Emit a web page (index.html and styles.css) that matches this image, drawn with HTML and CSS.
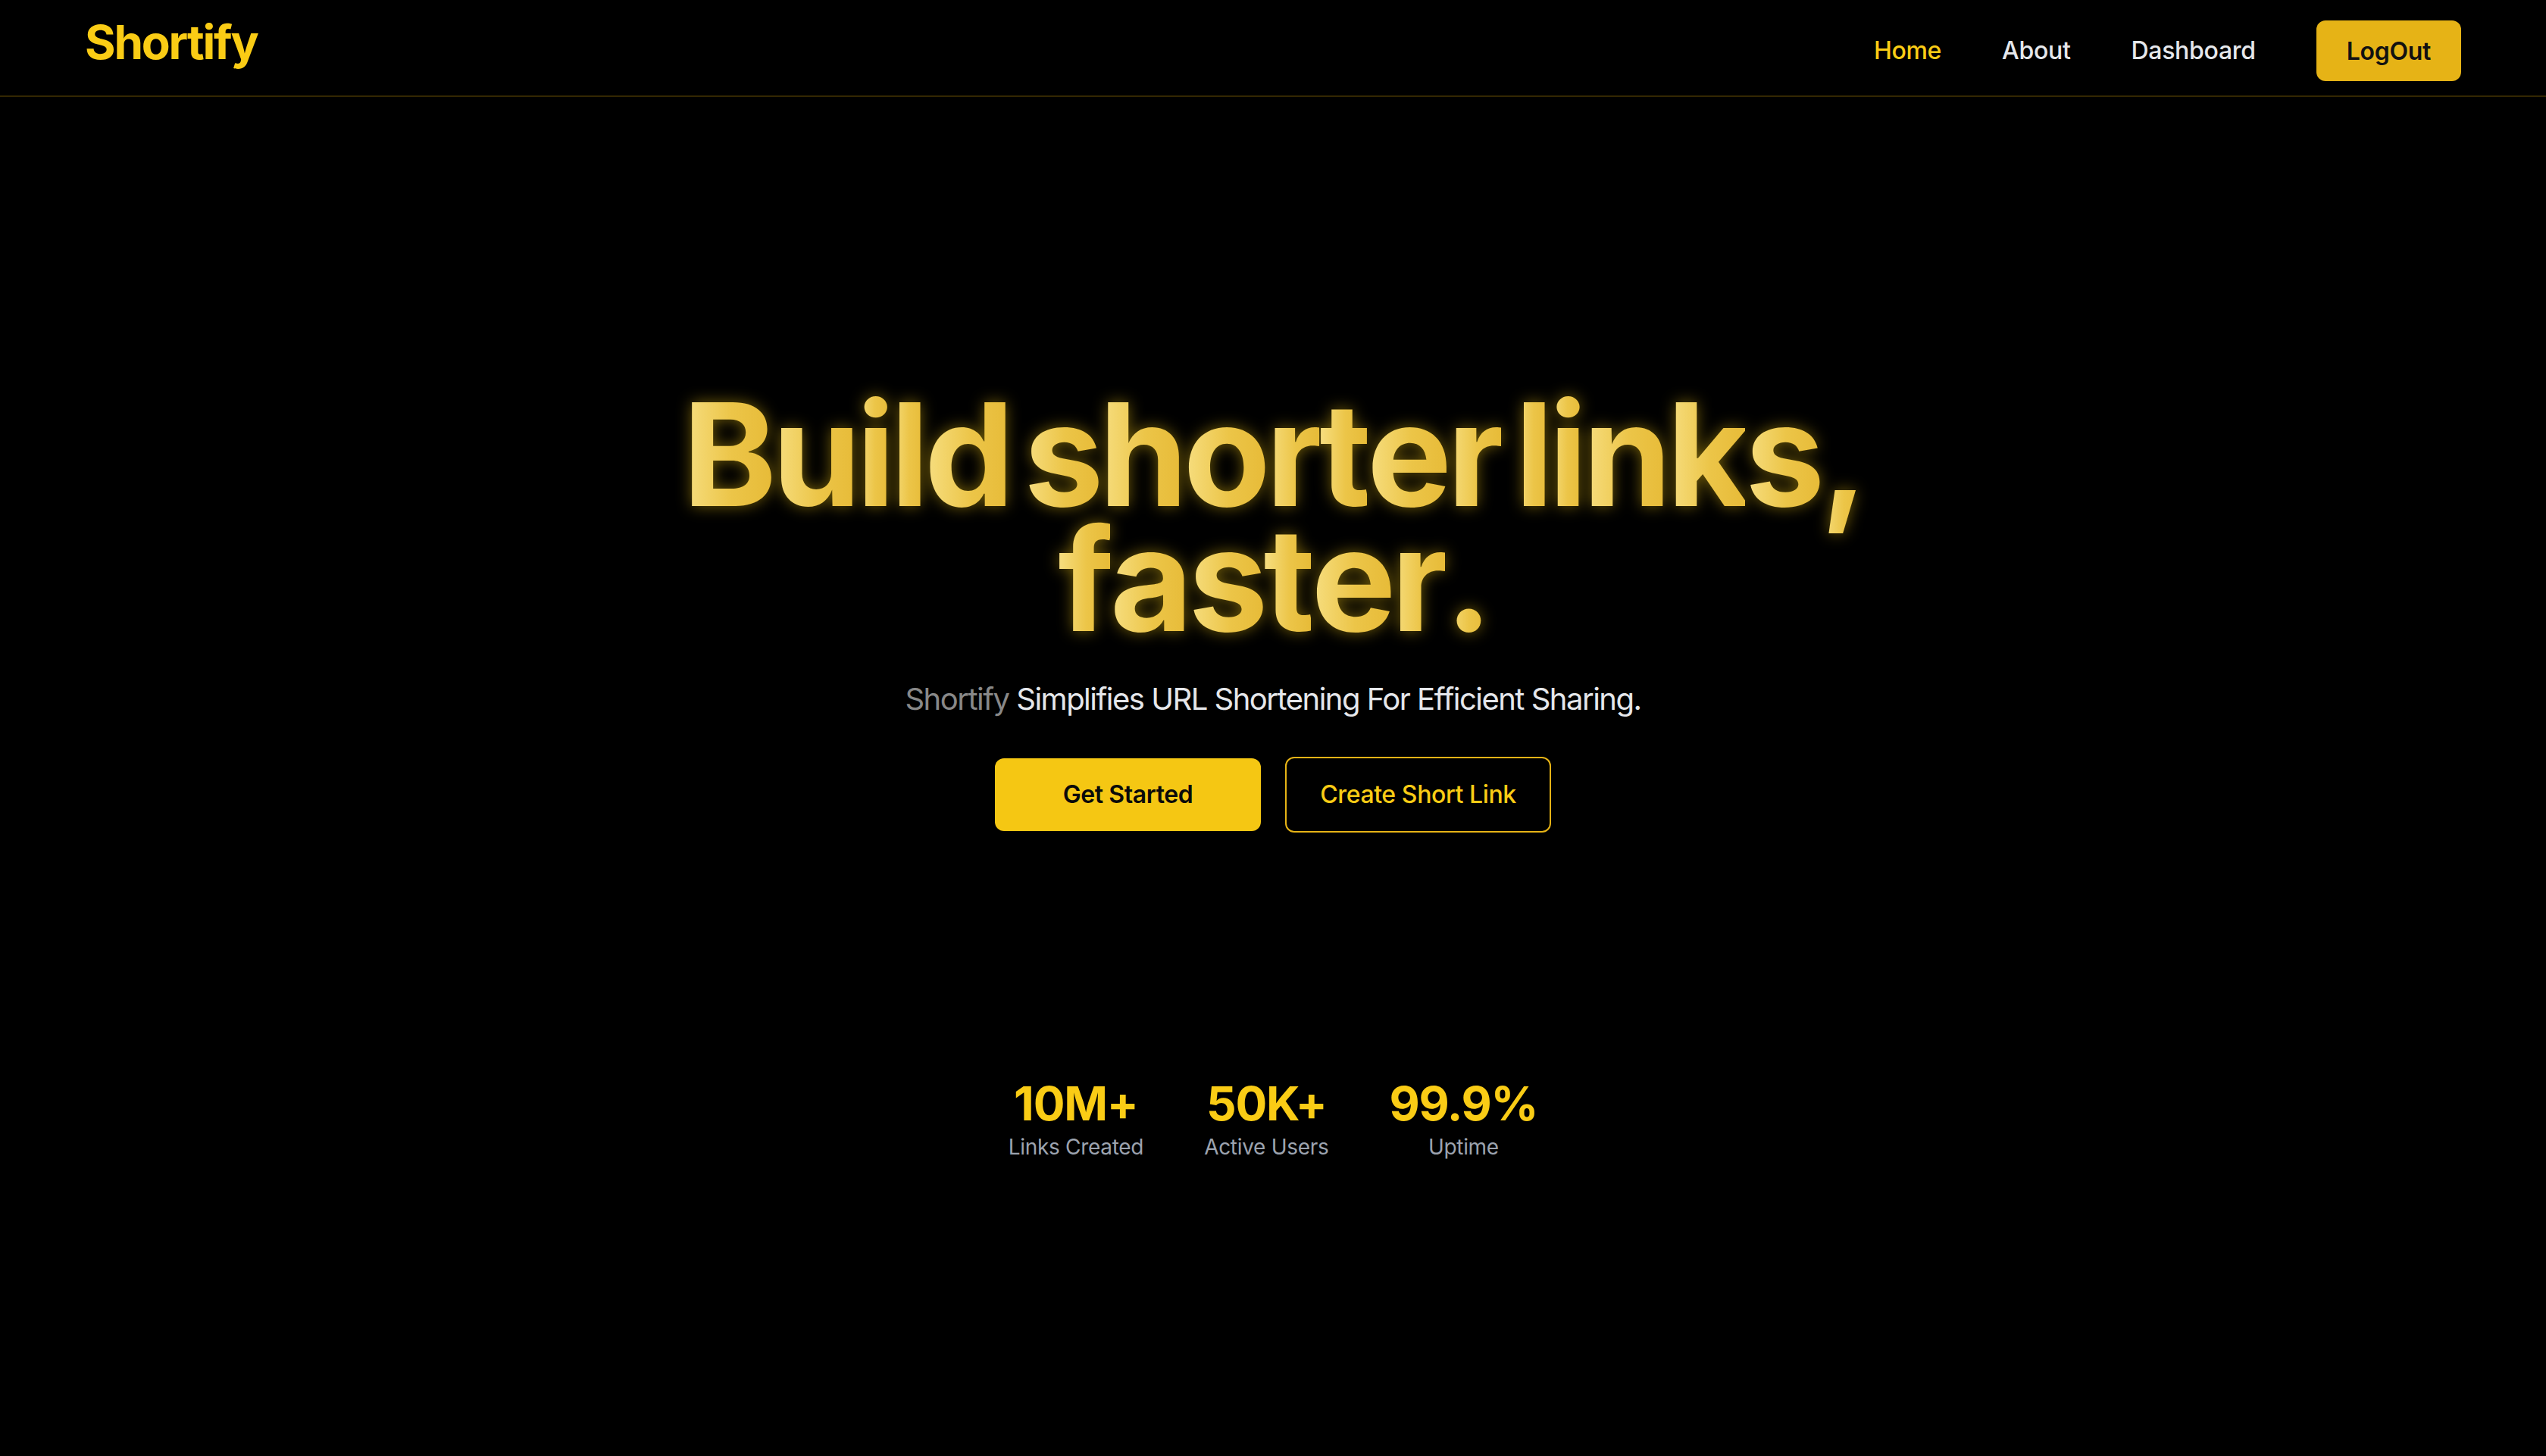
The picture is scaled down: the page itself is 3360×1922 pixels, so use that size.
FILE: index.html
```html
<!DOCTYPE html>
<html lang="en">
<head>
<meta charset="utf-8">
<title>Shortify</title>
<link rel="stylesheet" href="styles.css">
</head>
<body>
<header class="topbar">
  <a class="logo" href="#">Shortify</a>
  <nav class="nav">
    <a class="nav-link active" href="#">Home</a>
    <a class="nav-link" href="#">About</a>
    <a class="nav-link" href="#">Dashboard</a>
    <button class="logout">LogOut</button>
  </nav>
</header>
<main class="hero">
  <h1 class="title">
    <span class="line"><span class="word"><span class="ch">B</span><span class="ch">u</span><span class="ch">i</span><span class="ch">l</span><span class="ch">d</span></span> <span class="word"><span class="ch">s</span><span class="ch">h</span><span class="ch">o</span><span class="ch">r</span><span class="ch">t</span><span class="ch">e</span><span class="ch">r</span></span> <span class="word"><span class="ch">l</span><span class="ch">i</span><span class="ch">n</span><span class="ch">k</span><span class="ch">s</span><span class="ch ch-tail">,</span></span></span>
    <span class="line"><span class="word"><span class="ch">f</span><span class="ch">a</span><span class="ch">s</span><span class="ch">t</span><span class="ch">e</span><span class="ch">r</span><span class="ch">.</span></span></span>
  </h1>
  <p class="subtitle"><span class="brand">Shortify</span> Simplifies URL Shortening For Efficient Sharing.</p>
  <div class="actions">
    <a class="btn btn-primary" href="#">Get Started</a>
    <a class="btn btn-outline" href="#">Create Short Link</a>
  </div>
  <div class="stats">
    <div class="stat"><div class="stat-num">10M+</div><div class="stat-label">Links Created</div></div>
    <div class="stat"><div class="stat-num">50K+</div><div class="stat-label">Active Users</div></div>
    <div class="stat"><div class="stat-num">99.9%</div><div class="stat-label">Uptime</div></div>
  </div>
</main>
</body>
</html>
```
FILE: styles.css
```css
* { box-sizing: border-box; }
html, body { margin: 0; padding: 0; background: #000; }
body {
  font-family: Inter, "Noto Sans", "Liberation Sans", sans-serif;
  color: #e5e7eb;
  min-height: 1922px;
}
a { text-decoration: none; }

.topbar {
  height: 128px;
  padding: 25px 112px 0 112px;
  display: flex;
  justify-content: space-between;
  align-items: flex-start;
  border-bottom: 2px solid rgba(234, 179, 8, 0.22);
}
.logo {
  font-size: 62px;
  line-height: 62px;
  font-weight: 700;
  color: #facc15;
  letter-spacing: -2.2px;
}
.nav {
  margin-top: 2px;
  display: flex;
  align-items: center;
  gap: 80px;
}
.nav-link {
  font-size: 32px;
  line-height: 48px;
  font-weight: 500;
  color: #e5e7eb;
  letter-spacing: -0.3px;
}
.nav-link.active { color: #facc15; }
.logout {
  height: 80px;
  padding: 0 40px;
  border: none;
  border-radius: 12px;
  background: #e6b316;
  color: #111;
  font-family: inherit;
  font-size: 32px;
  font-weight: 600;
  letter-spacing: -0.3px;
}

.hero {
  display: flex;
  flex-direction: column;
  align-items: center;
  padding-top: 389px;
}
.title {
  margin: 0;
  font-size: 188px;
  line-height: 165px;
  font-weight: 700;
  letter-spacing: -0.032em;
  word-spacing: -20px;
  text-align: center;
  filter: drop-shadow(0 0 10px rgba(250, 204, 21, 0.45));
}
.line { display: block; height: 165px; }
.ch {
  display: inline-block;
  height: 165px;
  line-height: 165px;
  vertical-align: top;
  background: linear-gradient(90deg, #f7df82 0%, #ecc548 55%, #e7bb38 100%);
  -webkit-background-clip: text;
  background-clip: text;
  color: transparent;
}
.ch-tail {
  height: 195px;
  margin-bottom: -30px;
}
.subtitle {
  margin: 46px 0 0;
  font-size: 40px;
  line-height: 60px;
  color: #e5e7eb;
  letter-spacing: -1.5px;
}
.brand { color: #888; }
.actions {
  margin-top: 46px;
  display: flex;
  align-items: center;
  gap: 32px;
}
.btn {
  width: 351px;
  text-align: center;
  font-size: 32px;
  line-height: 48px;
  border-radius: 12px;
  letter-spacing: -0.4px;
}
.btn-primary {
  padding: 24px 0;
  background: #f5c713;
  color: #0a0a0a;
  font-weight: 600;
}
.btn-outline {
  padding: 24px 0;
  border: 2px solid #e6b316;
  color: #facc15;
  font-weight: 500;
}
.stats {
  margin-top: 327px;
  display: flex;
  gap: 80px;
}
.stat {
  display: flex;
  flex-direction: column;
  align-items: center;
}
.stat-num {
  font-size: 62px;
  line-height: 62px;
  font-weight: 700;
  color: #facc15;
  letter-spacing: -1.2px;
}
.stat-label {
  margin-top: 6px;
  font-size: 28px;
  line-height: 40px;
  color: #9ca3af;
  letter-spacing: -0.3px;
}
```
